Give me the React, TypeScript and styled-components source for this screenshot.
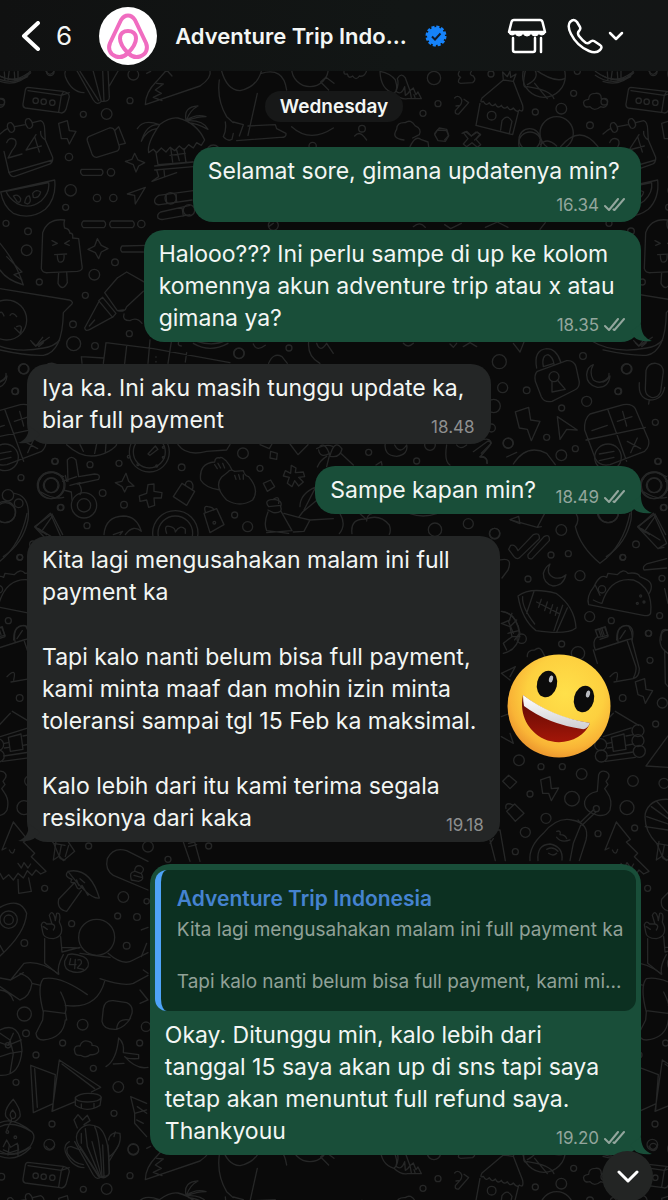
import React from "react";
import styled, { createGlobalStyle } from "styled-components";

const GlobalStyle = createGlobalStyle`
  *, *::before, *::after { box-sizing: border-box; }
  body { margin: 0; background: #0a0a0a; color: #f3f6f4; font-family: Inter, "Liberation Sans", sans-serif; }
  h1, p, ol { margin: 0; padding: 0; }
  button { border: 0; padding: 0; background: none; color: inherit; font: inherit; cursor: pointer; }
`;

const Screen = styled.div`
  position: relative;
  display: flex;
  flex-direction: column;
  min-height: 100vh;
  overflow: hidden;
  isolation: isolate;
`;

const WallpaperSvg = styled.svg`
  position: absolute;
  inset: 0;
  z-index: -1;
  width: 100%;
  height: 100%;
  fill: none;
  stroke: #262727;
  stroke-width: 4;
  stroke-linecap: round;
  stroke-linejoin: round;
`;

const Header = styled.header`
  display: flex;
  align-items: center;
  height: 71px;
  padding: 0 44px 0 20px;
  background: linear-gradient(90deg, #101111, #121615 60%, #131515);
`;

const BackButton = styled.button`
  display: flex;
  align-items: center;
  gap: 16px;
  font-size: 26px;
  line-height: 32px;
`;

const Avatar = styled.svg`
  width: 58px;
  height: 58px;
  margin-left: 27px;
  flex: none;
`;

const Title = styled.h1`
  margin-left: 18px;
  font-size: 22px;
  line-height: 32px;
  font-weight: 600;
  white-space: nowrap;
`;

const Badge = styled.svg`
  width: 22px;
  height: 22px;
  margin-left: 18px;
  flex: none;
`;

const Actions = styled.div`
  display: flex;
  align-items: center;
  gap: 20px;
  margin-left: auto;
`;

const IconButton = styled.button`
  display: flex;
  align-items: center;
  gap: 5px;
`;

const LineIcon = styled.svg`
  display: block;
  fill: none;
  stroke: #fff;
  stroke-linecap: round;
  stroke-linejoin: round;
`;

const Chat = styled.main`
  display: flex;
  flex-direction: column;
  padding: 20px 27px 47px;
`;

const DayLabel = styled.p`
  align-self: center;
  padding: 0 15px;
  margin-bottom: 25px;
  border-radius: 16px;
  background: #171818;
  font-size: 19px;
  line-height: 31px;
  font-weight: 600;
`;

const Thread = styled.ol`
  display: flex;
  flex-direction: column;
  gap: 22px;
  list-style: none;
`;

const Bubble = styled.li<{ $mine?: boolean; $joined?: boolean; $quote?: boolean; $share?: number }>`
  position: relative;
  align-self: ${(p) => (p.$mine ? "flex-end" : "flex-start")};
  min-width: ${(p) => (p.$share ? `${p.$share}%` : "0")};
  max-width: 82%;
  margin-top: ${(p) => (p.$joined ? "-14px" : "0")};
  padding: ${(p) => (p.$quote ? "6px 5px 8px" : "8px 15px")};
  border-radius: 20px;
  background: ${(p) => (p.$mine ? "#194e39" : "#242626")};
`;

const Body = styled.div<{ $inset?: boolean; $stacked?: boolean; $inline?: boolean }>`
  display: flex;
  flex-direction: column;
  gap: 33px;
  padding: ${(p) => (p.$inset ? "8px 10px 0" : "0")};
  padding-bottom: ${(p) => (p.$stacked ? "27px" : "0")};
  padding-right: ${(p) => (p.$inline ? "90px" : "0")};
  font-size: 23px;
  line-height: 32px;
`;

const Paragraph = styled.p`
  white-space: pre-line;
`;

const Meta = styled.span`
  position: absolute;
  right: 16px;
  bottom: 6px;
  display: flex;
  align-items: center;
  gap: 5px;
  color: #93a69d;
  font-size: 17px;
  line-height: 22px;
`;

const IncomingMeta = styled(Meta)`
  color: #8d8f8f;
`;

const Tail = styled.svg<{ $mine?: boolean }>`
  position: absolute;
  bottom: 0;
  ${(p) => (p.$mine ? "right: -11px;" : "left: -9px; transform: scaleX(-1);")}
  width: 22px;
  height: 18px;
  fill: ${(p) => (p.$mine ? "#194e39" : "#242626")};
`;

const Quote = styled.blockquote`
  margin: 0;
  padding: 16px 8px 16px 16px;
  border-left: 6px solid #4ea3f8;
  border-radius: 12px;
  background: #0c3021;
  color: #91a198;
  font-size: 19px;
  line-height: 26px;
`;

const QuoteName = styled.p`
  margin-bottom: 5px;
  color: #4583d0;
  font-size: 21px;
  font-weight: 600;
`;

const QuoteLine = styled.p`
  white-space: nowrap;
  & + & { margin-top: 26px; }
`;

const Sticker = styled.svg`
  position: absolute;
  left: calc(100% + 6px);
  bottom: 83px;
  width: 106px;
  height: 106px;
`;

const ScrollButton = styled.button`
  position: absolute;
  right: 15px;
  bottom: 0;
  display: grid;
  place-items: center;
  width: 51px;
  height: 51px;
  border-radius: 50%;
  background: #232524;
`;

type Patch = { x: number; y: number; dots: number[][]; lines: string[] };

// Doodles are grouped in patches, each drawn on a grid three times finer than the page.
const patches: Patch[] = [
  {
    x: 0, y: 70,
    dots: [[400,14,16],[390,92,9],[250,133,9],[320,132,16],[107,92,8],[131,95,8],[157,98,8],[4,95,10],[207,261,11],[333,307,11],[212,361,17],[291,384,11],[340,384,11],[197,412,9],[18,460,9],[84,484,10],[80,541,16],[424,462,11],[345,577,10],[283,614,16],[118,636,9],[256,676,9],[219,763,10],[388,791,9],[221,821,21],[285,828,10],[717,850,16],[867,834,9],[640,245,20],[820,466,15],[512,385,17],[567,421,17],[70,896,15],[938,228,11],[20,750,60]],
    lines: [
      "M84 52L190 64Q208 68 208 80L198 118Q192 132 180 128L76 114Q68 112 69 102L76 60Q78 52 84 52ZM84 62L184 76L190 66M184 76L176 126M184 76L208 68",
      "M0 18Q40 42 84 10M0 34Q50 52 92 8M28 0L24 30M54 0L54 32",
      "M196 20Q190 0 208 -10M196 20Q214 66 252 68M224 -10L280 90Q292 108 304 94L276 -10M240 4L296 92M304 94Q330 96 328 80L324 0M308 0L312 94M328 48L356 0",
      "M436 104Q436 68 470 34L500 0M436 104L600 48Q636 24 630 0M500 0L516 18M470 40L490 42L466 60L484 70L460 82L486 92",
      "M12 182L0 192M12 182L22 176M44 170L76 164M98 158L122 152Q134 156 134 180L136 210L158 262Q160 280 144 284L42 320Q30 320 26 304L12 244M136 210Q120 200 122 184M26 308L158 270M22 170Q22 156 34 158Q44 166 44 178Q40 190 30 186Q24 180 22 170ZM76 158Q76 144 88 146Q98 154 98 166Q94 178 84 174Q78 168 76 158Z",
      "M20 218Q26 200 44 208Q56 220 36 242L24 264L66 252M108 194L78 240L124 228M104 200L118 246",
      "M176 160L202 152L208 182L228 184L208 222L202 206L184 206Z",
      "M266 200L328 174Q340 172 344 182L358 230Q358 242 348 244L290 262Q280 262 276 252L262 212Q260 204 266 200ZM346 180L356 170L376 220L360 224",
      "M404 250L414 270L434 278L416 288L408 306L400 284L376 274L396 268Z",
      "M412 176Q430 146 478 164Q510 140 534 144Q590 158 614 210L604 226L590 218L580 234L566 224L552 240L538 228L524 242L510 232L498 246L484 234L470 248L460 238L446 248Q440 220 478 166M478 164Q440 160 424 214Q440 180 470 176M558 150Q550 110 594 108Q570 120 560 150Q590 130 618 140Q590 140 562 152Q610 150 624 178Q590 160 566 158M468 248L474 284L578 276M512 232L518 276M530 240L538 272M552 236L558 276M510 256L556 250M464 288L580 276M464 300L580 290M470 300L476 320L456 334L530 308M492 300L494 320",
      "M244 298L304 298Q314 306 304 316L248 316Q238 308 244 298ZM250 453L312 453Q322 462 312 473L250 473Q240 462 250 453ZM334 453L398 453Q408 462 398 473L334 473Q324 462 334 453ZM440 526L366 528Q358 538 366 546L430 546",
      "M382 372L436 352L406 402L404 376Z",
      "M580 362L476 376Q462 384 464 396Q468 406 480 404L576 390M570 406L482 426Q470 432 474 444Q480 450 490 448L570 434M498 374L500 400M528 370L530 396M546 412L550 438",
      "M2 366L164 330Q170 384 136 418Q90 452 40 430Q10 410 2 366ZM18 364L146 338Q150 368 124 392Q88 420 50 400Q26 384 18 364ZM40 378Q54 370 62 386Q62 400 52 396ZM74 398Q78 376 88 378Q96 398 82 402ZM98 370Q108 356 122 366Q118 386 100 382Z",
      "M194 450Q144 444 128 488L124 596Q128 610 144 608L232 604Q250 602 246 588L236 506L218 504Q220 488 210 490Q208 476 194 474Q190 462 194 450ZM176 608L174 640Q188 666 202 638L200 606M156 512L172 520L158 526M208 512L194 520L208 526M164 554L200 552M172 556Q172 580 184 576Q194 574 192 554",
      "M292 506L304 526L324 536L304 546L296 566L286 548L264 538L284 528Z",
      "M0 520Q50 580 70 645Q20 630 0 600M20 560L66 606L42 614L66 630",
      "M0 656L208 690Q224 696 212 706L190 728Q188 846 130 856Q80 858 0 840M-6 736Q4 716 12 738M30 736Q38 724 50 740M44 774L60 790L64 776M50 770Q70 760 62 790M92 812L108 828L128 802M114 826L148 802M116 830L130 818",
      "M352 624L380 606L440 640M352 624L314 668L352 722Q376 728 380 710L430 664M352 722L370 720M296 692L308 682L348 730L338 742ZM296 696L254 774Q256 786 270 778L340 740M268 768L284 750M372 732Q366 752 390 752Q410 740 426 760",
      "M318 818L460 836L690 878M318 818L310 880M380 828L374 880M450 810L444 880M514 816L504 880M244 860L310 864M560 848L556 876M244 860L246 880M468 860V862M468 874V876",
      "M580 820Q630 850 684 820M590 814Q640 830 676 812M536 816Q532 828 544 828M760 822Q770 846 796 826M806 880Q820 846 846 860L862 880M926 816Q922 860 960 880M950 820Q960 850 980 820L1000 850M806 470L820 460",
    ],
  },
  {
    x: 0, y: 0,
    dots: [[930,205,55]],
    lines: [
      "M664 210Q680 270 720 272Q770 262 784 214M784 220Q850 200 860 270M658 240Q650 300 680 350L700 368M772 280L744 406M744 378L826 374L830 386L858 400Q860 414 840 412L710 422M718 408L730 374L700 366M676 366Q680 390 670 410Q684 426 696 418L700 400M875 380Q930 430 1000 384M962 246L978 232L1002 250M962 246L986 270",
      "M138 214Q150 232 162 214M440 220L452 214",
    ],
  },
  {
    x: 334, y: 0,
    dots: [[300,234,20],[471,222,9],[312,311,9],[267,340,9],[84,386,10],[604,336,9],[682,326,16],[719,280,9],[768,376,10],[668,400,50],[630,228,64],[473,347,13],[587,418,32],[730,214,9],[958,216,11]],
    lines: [
      "M30 214Q28 224 40 222Q44 238 56 228Q66 244 76 228Q92 232 98 212",
      "M138 214Q140 270 180 280Q194 270 184 240Q170 220 138 214ZM180 280Q200 300 220 296L262 296L252 276L246 284L238 264L228 272L214 234Q202 216 190 236Q196 250 186 274Q202 288 212 260L214 286Q224 280 228 272L232 294M240 284L244 296",
      "M376 214Q368 226 380 232Q366 246 380 250L416 248Q428 240 418 228Q404 224 412 214",
      "M362 294Q370 284 380 294Q388 304 378 316L366 318M378 316L364 332Q362 344 374 342L404 308L390 298",
      "M508 240L444 294Q436 310 448 304Q456 320 466 308Q474 324 484 312Q492 328 502 316Q510 330 520 320Q528 336 538 324Q550 340 556 330Q570 340 566 316L538 244M508 240L506 216L520 230L528 214L530 232L546 222L538 244ZM438 310L426 376L536 404L554 332M500 390L504 362Q520 340 534 364L526 400",
      "M576 204Q560 270 580 260Q650 270 660 296M580 254Q620 234 600 206M602 250L640 296M600 206Q660 250 692 236",
      "M750 314Q744 300 764 298Q764 280 784 280Q802 278 802 296Q824 296 820 312Q816 326 800 320Q780 336 768 320Q754 324 750 314Z",
      "M784 214Q830 250 880 232L898 214M784 226Q830 260 890 230M820 216L822 242M850 216L852 244",
      "M210 420Q170 416 188 388Q188 366 214 368Q230 356 244 378Q264 386 256 404L236 414M302 400L316 384L338 388L344 406L332 420M384 400L396 396L412 408L430 396L440 404L422 420M62 408Q76 392 90 410L98 420",
    ],
  },
  {
    x: 400, y: 130,
    dots: [[390,40,34]],
    lines: [
      "M104 14L112 0L140 2L146 18L136 34L114 32ZM190 8L200 4L214 18L228 6L240 12L228 28L242 44L232 52L216 38L200 50L190 42L204 26ZM422 44Q440 20 470 48M482 50Q540 -20 594 50M30 50Q46 16 62 28L84 36L86 50M40 290Q60 272 76 292M134 284L152 296L184 280M256 292L292 276L324 292M420 298L436 278M10 640Q24 656 40 640M150 642L160 652L170 640M190 650L210 638L230 650",
    ],
  },
  {
    x: 480, y: 340,
    dots: [[58,65,21],[68,143,15],[140,151,10],[309,48,10],[441,87,15],[415,154,10],[320,184,15],[245,204,9],[41,198,20],[85,309,15],[200,292,9],[244,346,16],[286,326,9],[34,264,12],[526,247,9],[535,364,9],[222,110,15],[44,580,15],[244,570,16],[213,645,9],[265,641,9],[468,613,10],[428,652,9],[144,717,9],[300,707,15],[546,715,9],[329,830,15],[394,842,9],[539,827,9],[505,880,9],[524,436,40],[524,436,22],[384,516,32],[552,502,9],[482,768,3],[472,790,3],[492,786,3],[366,748,11],[384,352,40]],
    lines: [
      "M170 84Q160 30 200 26Q230 26 242 66M190 80Q184 46 204 44Q218 50 222 72M190 80L222 70M172 94L260 62Q282 60 288 80L298 126Q298 144 284 150L216 184Q192 188 184 170L166 124Q162 104 172 94ZM216 124L216 156L256 148L232 120",
      "M340 74Q326 98 340 120Q364 138 390 108Q386 144 352 142Q320 134 320 104Q322 80 340 74Z",
      "M498 92Q504 68 528 70Q550 74 550 96L542 156Q532 176 514 172Q496 166 496 148ZM478 128Q474 176 510 180Q546 180 554 142M508 180L506 192",
      "M106 216L146 202L152 240L180 244L154 302L142 268L118 264Z",
      "M232 230L292 270L260 268L240 298Z",
      "M330 222L430 194Q456 190 466 206L506 300Q510 320 494 334L390 374Q358 380 346 356L314 270Q312 236 330 222ZM384 210L440 364M318 300L496 262M336 272L382 256M412 244L456 230M428 214L440 258M442 304L482 326M472 294L452 338M358 342L402 334M358 362L402 352",
      "M100 372Q140 310 200 340L226 374M0 302Q30 290 34 310L4 340M0 350Q20 346 22 370",
      "M492 456Q530 480 560 472M488 420Q498 396 530 398L560 410",
      "M286 560Q300 540 288 520M286 560Q300 620 360 670Q430 620 450 520M92 540L172 562L194 520M172 562L184 560",
      "M474 562L520 520L560 610L534 626ZM484 566L540 600M534 626L552 622",
      "M92 616Q106 612 114 632L160 584Q180 576 178 596L122 650Q112 662 102 650L86 628ZM144 644L192 590Q210 580 208 602L156 656Q142 660 144 644Z",
      "M560 656L500 672Q486 680 492 690L560 684",
      "M210 672Q196 700 220 712Q240 720 258 704Q250 738 218 738Q190 730 190 700Q196 680 210 672Z",
      "M114 768Q150 740 228 760Q284 800 288 864Q260 886 168 872Q126 840 114 768ZM128 770Q124 800 164 852M162 754L140 820M262 804L230 876M170 786L236 820M184 778L176 802M202 786L194 812M218 794L210 820M232 802L226 826M248 796L222 872",
      "M366 790Q390 710 460 720Q520 744 512 820Q508 830 490 826L326 794Q318 770 342 740Q360 700 380 712L384 700L412 704Q430 684 444 700Q474 696 480 710L498 718Q524 730 508 760M346 736L360 766M340 780Q360 790 366 790",
      "M60 660Q100 650 84 690L66 714M66 814Q110 820 118 880L104 900M66 850L90 840M96 820L86 846L100 880M84 880L116 872",
      "M350 870L376 860L384 890L360 898M362 868L368 890M410 900Q410 850 446 858Q460 880 456 900M544 900Q540 870 564 870",
      "M330 0Q400 44 500 24Q530 20 548 0M100 10L120 36L132 6M466 8L476 18L500 2",
      "M554 746L564 790",
    ],
  },
  {
    x: 0, y: 340,
    dots: [[45,154,9],[717,40,15],[164,364,9],[270,374,9],[357,370,9],[729,340,16],[545,382,10],[780,385,9],[63,413,9],[308,459,10],[181,503,9],[372,494,10],[261,557,9],[704,525,9],[743,560,15],[152,436,40],[152,436,22],[252,496,38],[252,496,20],[448,336,60],[448,336,48],[526,580,68],[526,580,52],[24,466,17],[56,490,13],[16,518,30],[643,548,4],[60,652,8],[386,350,4],[414,374,3],[470,378,3],[490,352,3],[490,322,3]],
    lines: [
      "M204 424L202 360Q214 344 228 360L236 410L284 402Q304 402 296 418L232 432M188 424L230 410M190 450L214 456L216 480M236 430Q250 452 240 464M210 436L240 428M196 406L200 424",
      "M378 400L386 424L402 438L382 440L374 456L366 440L346 428L366 424Z",
      "M444 434L462 432L462 454L486 458L484 474L462 474L464 496L446 502L440 480L420 484L418 468L440 460Z",
      "M546 430L584 454L560 496L520 470ZM556 434Q558 420 572 424Q584 436 576 450",
      "M602 420Q596 370 644 366Q646 350 660 354Q662 348 678 362Q690 376 696 390M602 420Q616 444 660 450M644 374L652 386M654 370L662 384M668 370L674 384M684 396Q690 386 704 394L730 392Q734 408 746 410Q780 450 758 480Q720 504 680 480Q640 440 666 410ZM704 406L708 418M716 404L720 418M730 404L730 418",
      "M790 430L812 420L824 440L802 454Z",
      "M874 376L888 384L886 398L910 396L914 410L896 412L910 426L896 438L884 422L876 440L862 430L868 412L850 408L856 392L872 400Z",
      "M612 520L650 506L672 554L630 578ZM616 516Q610 496 624 500Q640 502 642 510",
      "M806 500Q790 480 820 478Q850 480 842 500Q850 520 820 518L804 510M806 500L842 496M820 478Q840 464 836 490M804 516Q790 550 800 572L866 580M842 512L876 572L800 578M852 520L896 532L908 516L1000 440M896 532L930 540L912 574L880 576M930 540L1000 536M900 500Q900 460 950 440M912 510L948 440",
      "M104 560L156 522L188 584M104 560L140 584M156 530L128 570M112 568L128 578",
      "M312 584Q316 530 370 528Q410 528 424 574Q400 552 376 584M340 584L368 574L360 584",
      "M500 580Q490 552 512 560Q526 564 526 576Q540 552 556 568L556 580",
      "M42 460Q92 466 84 540Q70 610 10 650M200 314Q260 370 326 334Q350 320 350 312M240 314L250 334M290 312L284 340M318 312L316 336M444 342L466 318L474 328L450 346ZM534 314Q560 350 620 334L680 330L690 314M780 314L808 326L816 312M812 334L832 340L830 358L810 354ZM870 312L894 344L924 314M950 326Q980 310 1000 320M956 330Q960 356 990 340L980 380",
      "M0 126Q20 120 18 100",
    ],
  },
  {
    x: 220, y: 435,
    dots: [[446,52,9],[630,30,16],[590,78,9],[745,266,15],[645,284,20],[864,25,15],[824,296,16]],
    lines: [
      "M496 24Q490 62 530 64Q566 58 560 30Q540 60 524 30M292 96Q300 76 320 64M300 34Q316 20 330 62Q344 10 366 42Q360 70 330 64M364 56L400 90M680 30Q672 80 690 90M710 30Q720 46 740 30M760 50L804 18Q820 20 806 36L780 66Q806 66 800 84M468 90L484 80L486 90M360 236Q380 270 358 296M396 296Q390 250 438 252Q480 236 508 270Q514 288 508 298M438 252L420 236M440 258Q440 240 456 236M860 66L890 52M570 236Q610 250 650 236M870 254L896 244L900 266Z",
    ],
  },
  {
    x: 490, y: 600,
    dots: [[215,132,9],[476,100,9],[480,181,9],[398,294,10],[517,309,15],[497,372,9],[87,481,16],[153,500,9],[217,500,9],[275,522,16],[429,543,16],[522,550,15],[120,582,9],[246,596,22],[411,623,21],[168,655,15],[106,697,15],[324,701,9],[434,684,9],[76,755,9],[264,160,20],[95,116,14],[319,626,9],[332,434,18],[444,392,18],[444,422,18],[448,454,18],[334,468,18]],
    lines: [
      "M316 90L344 82L354 106L324 112ZM326 88L332 106M336 86L342 104M320 112Q306 124 316 150L410 120L426 116M384 124Q376 80 410 76Q436 80 426 122L448 206Q448 230 430 236L372 246M310 150L322 190M412 124L438 200Q440 216 430 234M390 116L406 92M360 230Q390 200 380 240",
      "M436 246L464 236L468 268L488 272L466 310L460 290L444 284Z",
      "M376 334L446 376M330 382L370 340M364 412L402 402L408 448L370 454ZM352 430L364 428M352 444L366 442M408 408L430 404M408 436L430 432M346 484L436 472M350 468L430 456M340 410L424 384",
      "M534 408L468 498L534 502M514 100Q500 140 534 160M534 90Q516 84 514 100M524 150L526 250L534 260",
      "M112 170Q110 150 134 150Q150 136 160 160L170 180M34 220L76 200L60 230M34 220L60 240M34 350L60 340M34 410L70 430L60 400",
      "M38 544L56 526L80 546L60 566ZM50 634L74 612L102 640L76 664ZM48 626Q44 608 62 612L70 616M152 540L180 530L184 566L206 564L184 602L176 580L158 580Z",
      "M326 524Q332 508 350 516Q362 524 354 536L348 544L354 554L344 566L352 578Q368 600 360 630Q350 650 324 646Q280 634 284 604Q290 580 322 574ZM312 628L270 668L264 660M318 636L276 676",
      "M120 782Q116 740 160 700Q200 650 246 660Q300 670 288 720L268 782M272 676L250 730L240 782M200 694Q214 690 210 704Q226 704 230 716M200 712Q214 730 240 720M144 782Q140 734 180 732Q220 740 216 780M170 748Q190 738 204 754M176 760Q190 770 200 760",
      "M534 598Q480 596 466 640Q460 690 500 730L534 736M484 620L534 656M470 650L534 672M500 604L534 640M466 680L534 690M500 730L520 776L534 780M0 720L16 782M0 690L30 690L46 782M0 730L10 716",
      "M34 34Q80 40 90 100Q84 150 40 160M34 70L60 80L66 110L40 130M60 80L80 60M66 110L90 110M40 130L50 150",
    ],
  },
  {
    x: 0, y: 820,
    dots: [[444,80,16],[266,78,9],[626,78,9],[134,205,9],[504,118,9],[370,231,16],[353,288,9],[411,291,10],[215,311,9],[73,369,10],[380,377,10],[73,582,21],[248,614,16],[78,640,10],[188,669,9],[108,705,9],[419,669,9],[280,745,9],[48,787,9],[355,801,16],[420,783,9],[342,880,9],[156,912,9],[148,974,16],[400,987,16],[26,299,26],[26,299,14],[290,352,54],[22,936,4],[46,952,4],[24,676,8],[440,244,8],[438,620,14]],
    lines: [
      "M40 6L82 58L70 66L104 100L94 110L138 154L122 162L108 150L96 166L82 152L70 174L54 160L40 180L26 164L10 178L0 160M40 6L6 90L18 84M28 90Q38 110 44 88M54 130L64 144L72 128L84 144L92 132M54 178L56 220L94 214L86 174",
      "M168 64L160 120L178 108L190 122L224 94L204 64M178 108L184 76M196 110L206 76",
      "M444 210L340 166Q314 150 322 116Q340 80 380 92L444 124M394 180Q386 156 404 154Q404 134 422 138Q438 146 424 160Q436 180 416 184ZM402 166L424 172M406 154L422 160",
      "M204 154Q270 140 298 234Q270 240 204 154ZM204 154Q190 170 216 178Q206 190 224 188L232 204Q240 212 246 196L264 226M230 180L236 196M222 190L176 238Q170 268 200 274L244 212M254 188L240 176",
      "M0 262Q60 230 80 280Q76 340 0 408M0 376L10 394",
      "M124 314Q130 300 140 312L156 312L148 286Q156 268 164 290L166 302L170 280Q184 276 178 306L184 320Q190 350 160 356Q130 356 128 336ZM130 320L142 328M156 312Q170 316 160 330M134 356L134 430L174 462M182 350L186 396L240 382M190 404Q170 440 176 462M186 382L238 384M324 400Q370 440 400 420L444 398M300 476Q370 500 400 490L444 466M240 400Q310 410 330 412",
      "M204 404Q220 398 250 410Q270 420 264 440Q250 462 220 456Q190 450 194 424ZM212 416L208 434L228 434M226 418L224 446M234 420Q246 416 244 430L232 444L250 448",
      "M32 480L72 430Q120 420 176 462M32 480L0 474M32 480L70 458M0 500L60 540Q90 530 96 490M60 460Q90 470 96 490L122 496M0 510Q30 512 40 542M130 476Q180 466 262 524M130 476Q110 500 130 576L128 600M182 516Q204 560 196 576L200 600M130 572L194 580M128 600L108 640Q110 660 130 660Q190 654 196 600M196 556Q290 570 314 484",
      "M310 566Q314 540 340 542L380 548Q400 556 396 580L388 600Q352 594 350 628Q310 630 306 604ZM350 628Q376 620 392 594",
      "M224 694Q220 676 240 678Q246 658 266 664Q278 668 276 676Q298 676 296 694Q290 706 272 704Q256 716 242 706Q226 708 224 694Z",
      "M318 740Q350 720 356 654Q374 670 370 698L416 704L416 716Q380 718 374 710Q410 750 444 742M340 732L372 730",
      "M92 736L166 764L158 870M92 736L100 878L158 852M104 746L112 862M178 720L302 802L274 816M178 720L156 874L224 846M186 732L284 806M226 832Q240 820 264 820Q300 820 304 832Q300 846 262 846Q226 846 226 832L226 856Q260 880 300 856L304 832M244 852L244 864M282 850L282 864",
      "M0 630Q60 600 66 690Q60 770 0 766M0 640L30 660L40 700L30 760M0 668L24 676L64 660M30 700L66 694M0 710L30 700M24 676L40 640",
      "M40 838Q10 870 18 890Q40 920 60 890Q64 870 40 838ZM38 870Q24 884 36 896Q50 896 46 880ZM34 896L34 906M0 920Q40 900 96 936Q110 950 90 980Q50 1010 0 1000M0 908Q40 890 96 936M10 980L20 960L32 982L52 970L56 990L30 998L10 990M34 902L20 930",
      "M222 900L234 884L248 900L262 886L270 902L252 914M222 900L232 924M238 930Q260 904 296 922Q320 940 326 1000L328 1060Q320 1080 296 1070L238 980Q220 950 238 930ZM256 926L262 980L300 1070M284 920Q300 950 306 1072M244 940L244 970M202 1000Q196 978 214 980L240 990M326 960Q330 934 360 940Q366 980 328 1010M202 1000Q220 1030 250 1034M342 950L346 936",
      "M392 830L404 880L404 910L440 950M392 830L440 850M404 880L440 870M410 900L430 910M412 860L440 880M424 410L440 370M424 330L444 322M420 510L444 540L420 550M430 450L444 460",
      "M550 66L570 124M566 70L584 66L600 124M566 80L590 74",
    ],
  },
];

function Wallpaper() {
  return (
    <WallpaperSvg aria-hidden="true">
      <defs>
        <g id="doodles">
          {patches.map((p, i) => (
            <g key={i} transform={`translate(${p.x} ${p.y}) scale(0.3333)`}>
              {p.dots.map(([x, y, r], k) => <circle key={k} cx={x} cy={y} r={r} />)}
              {p.lines.map((d, k) => <path key={k} d={d} />)}
            </g>
          ))}
        </g>
      </defs>
      <use href="#doodles" />
      <use href="#doodles" y="1075" />
      <use href="#doodles" x="-603" />
      <use href="#doodles" x="603" />
      <use href="#doodles" x="603" y="1075" />
    </WallpaperSvg>
  );
}

function Ticks() {
  return (
    <LineIcon width="21" height="14" viewBox="0 0 21 14" stroke="currentColor" style={{ stroke: "currentColor" }} strokeWidth="2" aria-hidden="true">
      <path d="M1 8l4 4L14 1M9.500 11.500l1 .5L20 1" />
    </LineIcon>
  );
}

function Time({ value, mine }: { value: string; mine?: boolean }) {
  return mine ? <Meta><time>{value}</time><Ticks /></Meta> : <IncomingMeta><time>{value}</time></IncomingMeta>;
}

function BubbleTail({ mine }: { mine?: boolean }) {
  return (
    <Tail $mine={mine} viewBox="0 0 22 18" aria-hidden="true">
      <path d="M11 0C11 8 14 14 22 17C15 18 8 17 4 13L0 8Z" />
    </Tail>
  );
}

function GrinningFace() {
  return (
    <Sticker viewBox="0 0 106 106" role="img" aria-label="Grinning face">
      <defs>
        <radialGradient id="skin" cx="0.56" cy="0.38" r="0.62">
          <stop offset="0" stopColor="#ffe04a" />
          <stop offset="0.6" stopColor="#fdd03f" />
          <stop offset="0.86" stopColor="#f9b436" />
          <stop offset="1" stopColor="#ee9b2f" />
        </radialGradient>
        <linearGradient id="mouth" x1="0" y1="0" x2="0" y2="1">
          <stop offset="0" stopColor="#5a0a04" />
          <stop offset="1" stopColor="#a31608" />
        </linearGradient>
        <linearGradient id="teeth" x1="0" y1="0" x2="0" y2="1">
          <stop offset="0" stopColor="#ffffff" />
          <stop offset="1" stopColor="#cfcfd2" />
        </linearGradient>
      </defs>
      <circle cx="53" cy="53" r="51.500" fill="url(#skin)" />
      <ellipse cx="41" cy="31" rx="10" ry="13.500" fill="#0b0b0b" transform="rotate(14 41 31)" />
      <ellipse cx="78" cy="46" rx="10" ry="13.500" fill="#0b0b0b" transform="rotate(14 78 46)" />
      <ellipse cx="45" cy="26" rx="2" ry="3.500" fill="#b9bcc0" transform="rotate(14 45 26)" />
      <ellipse cx="82" cy="41" rx="2" ry="3.500" fill="#b9bcc0" transform="rotate(14 82 41)" />
      <path d="M17 42C13 62 22 78 38 86C56 94 78 86 84 70Q46 65 17 42Z" fill="url(#mouth)" />
      <path d="M17 42Q46 64 84 70Q81 77 76 76Q42 71 18 53Q17 48 17 42Z" fill="url(#teeth)" />
    </Sticker>
  );
}

export default function App() {
  return (
    <Screen>
      <GlobalStyle />
      <Wallpaper />
      <Header>
        <BackButton aria-label="Back, 6 unread chats">
          <LineIcon width="20" height="30" viewBox="0 0 20 30" strokeWidth="4">
            <path d="M18 2L4 15l14 13" />
          </LineIcon>
          <span>6</span>
        </BackButton>
        <Avatar viewBox="0 0 58 58" role="img" aria-label="Adventure Trip Indonesia">
          <circle cx="29" cy="29" r="29" fill="#fff" />
          <path
            d="M29 46C24 41 21 36 21 31.500C21 26.500 24.500 24 29 24S37 26.500 37 31.500C37 36 34 41 29 46C25 50 20 50.500 17 49.500C10 47 9 41 11 36L22 13Q25 8.500 29 8.500T36 13L47 36C49 41 48 47 41 49.500C38 50.500 33 50 29 46Z"
            fill="none" stroke="#f06cc0" strokeWidth="4" strokeLinejoin="round"
          />
        </Avatar>
        <Title>Adventure Trip Indo...</Title>
        <Badge viewBox="0 0 22 22" role="img" aria-label="Verified">
          <circle cx="11" cy="11" r="9" fill="#1683fa" />
          <circle cx="11" cy="11" r="9" fill="none" stroke="#1683fa" strokeWidth="3" strokeDasharray="3 1.710" />
          <path d="M7 11.500l3 3 5.500-6" fill="none" stroke="#101b2b" strokeWidth="2" />
        </Badge>
        <Actions>
          <IconButton aria-label="Store">
            <LineIcon width="40" height="36" viewBox="0 0 40 36" strokeWidth="2.500">
              <path d="M7 2h26q2 0 2.500 2L38 14H2L4.500 4Q5 2 7 2ZM6 20v12q0 2 2 2h18q2 0 2-2V20M34 20v14" />
              <path d="M2 14q0 3 3 3t3-2q1 3 4 3t4-3q1 3 4 3t4-3q1 3 4 3t4-3q0 2 3 2t3-3Z" fill="#fff" strokeWidth="1" />
            </LineIcon>
          </IconButton>
          <IconButton aria-label="Call options">
            <LineIcon width="36" height="36" viewBox="0 0 36 36" strokeWidth="2.500">
              <path d="M3 4Q7 0 10 4L13 9Q14 11 12 13Q10 15 12 18Q15 22 19 25Q21 26 23 24Q25 22 27 23L33 27Q36 29 33 32Q29 36 22 33Q10 28 4 16Q0 8 3 4Z" />
            </LineIcon>
            <LineIcon width="16" height="10" viewBox="0 0 16 10" strokeWidth="2.500">
              <path d="M2 2l6 6 6-6" />
            </LineIcon>
          </IconButton>
        </Actions>
      </Header>
      <Chat>
        <DayLabel>Wednesday</DayLabel>
        <Thread>
          <Bubble $mine $share={73}>
            <Body $stacked>
              <Paragraph>Selamat sore, gimana updatenya min?</Paragraph>
            </Body>
            <Time mine value="16.34" />
          </Bubble>
          <Bubble $mine $joined $share={81}>
            <Body>
              <Paragraph>{"Halooo??? Ini perlu sampe di up ke kolom\nkomennya akun adventure trip atau x atau\ngimana ya?"}</Paragraph>
            </Body>
            <Time mine value="18.35" />
            <BubbleTail mine />
          </Bubble>
          <Bubble $share={75.5}>
            <Body>
              <Paragraph>{"Iya ka. Ini aku masih tunggu update ka,\nbiar full payment"}</Paragraph>
            </Body>
            <Time value="18.48" />
            <BubbleTail />
          </Bubble>
          <Bubble $mine>
            <Body $inline>
              <Paragraph>Sampe kapan min?</Paragraph>
            </Body>
            <Time mine value="18.49" />
            <BubbleTail mine />
          </Bubble>
          <Bubble $share={77}>
            <Body>
              <Paragraph>{"Kita lagi mengusahakan malam ini full\npayment ka"}</Paragraph>
              <Paragraph>{"Tapi kalo nanti belum bisa full payment,\nkami minta maaf dan mohin izin minta\ntoleransi sampai tgl 15 Feb ka maksimal."}</Paragraph>
              <Paragraph>{"Kalo lebih dari itu kami terima segala\nresikonya dari kaka"}</Paragraph>
            </Body>
            <Time value="19.18" />
            <BubbleTail />
            <GrinningFace />
          </Bubble>
          <Bubble $mine $quote $share={80}>
            <Quote>
              <QuoteName>Adventure Trip Indonesia</QuoteName>
              <QuoteLine>Kita lagi mengusahakan malam ini full payment ka</QuoteLine>
              <QuoteLine>Tapi kalo nanti belum bisa full payment, kami mi...</QuoteLine>
            </Quote>
            <Body $inset>
              <Paragraph>{"Okay. Ditunggu min, kalo lebih dari\ntanggal 15 saya akan up di sns tapi saya\ntetap akan menuntut full refund saya.\nThankyouu"}</Paragraph>
            </Body>
            <Time mine value="19.20" />
            <BubbleTail mine />
          </Bubble>
        </Thread>
      </Chat>
      <ScrollButton aria-label="Scroll to latest message">
        <LineIcon width="22" height="13" viewBox="0 0 22 13" strokeWidth="3">
          <path d="M2 2l9 9 9-9" />
        </LineIcon>
      </ScrollButton>
    </Screen>
  );
}
